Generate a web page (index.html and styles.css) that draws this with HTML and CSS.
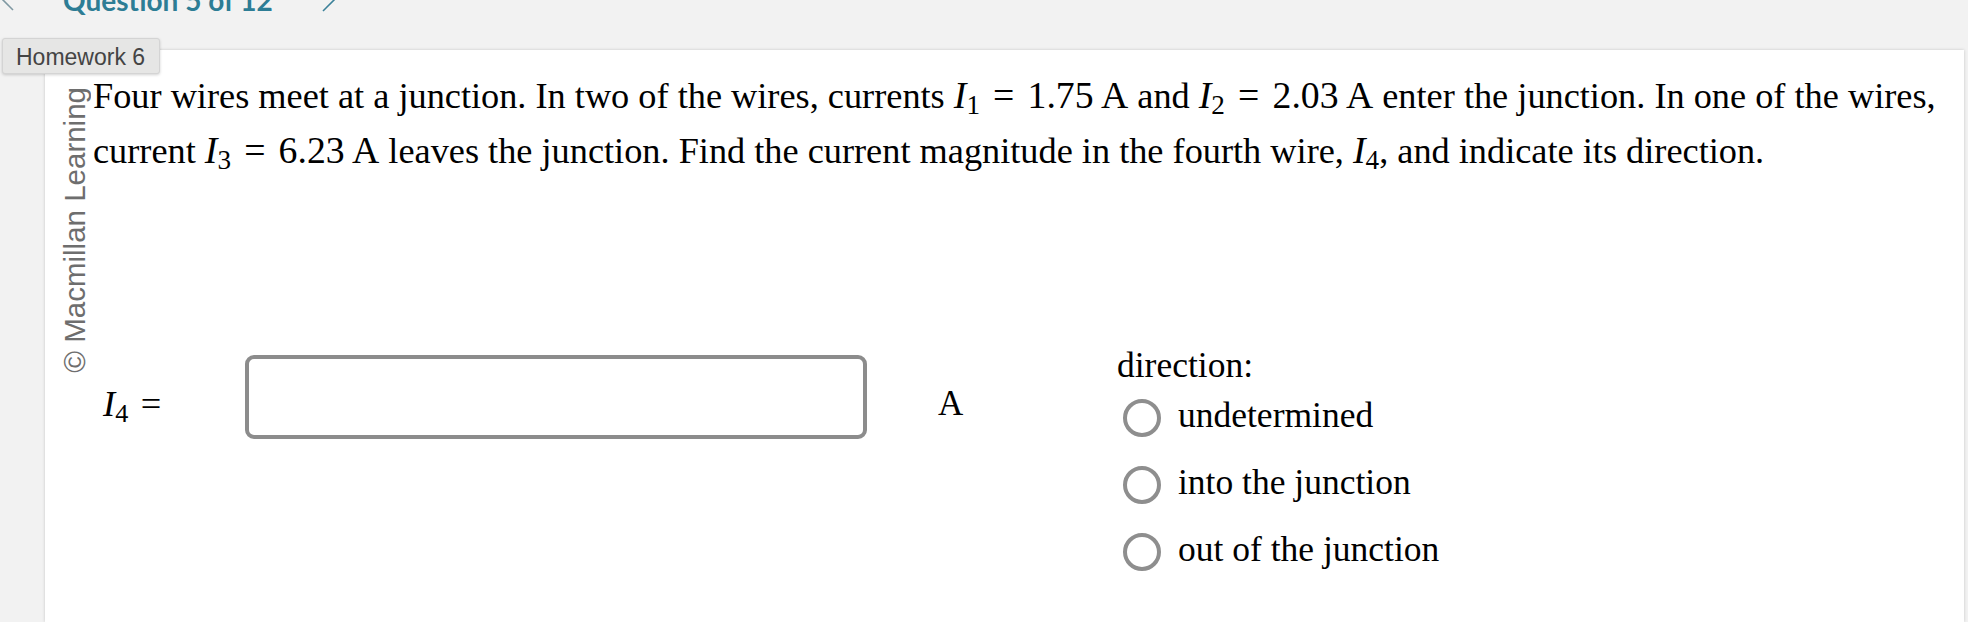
FILE: index.html
```html
<!DOCTYPE html>
<html lang="en">
<head>
    <meta charset="UTF-8">
    <meta name="viewport" content="width=device-width, initial-scale=1.0">
    <title>Question 5 of 12</title>
    <link rel="stylesheet" href="styles.css">
</head>
<body>
    <div class="qnav">
        <svg class="chev chev-left" width="16" height="14" viewBox="0 0 16 14">
            <polyline points="2,-1 13,10" fill="none" stroke="#7f98a2" stroke-width="1.6"/>
        </svg>
        <div class="qtitle">Question 5 of 12</div>
        <svg class="chev chev-right" width="16" height="14" viewBox="0 0 16 14">
            <polyline points="14,-1 2,11" fill="none" stroke="#3b8199" stroke-width="1.6"/>
        </svg>
    </div>
    <div class="tag">Homework 6</div>
    <div class="card">
        <div class="side">
            <span class="copy">© Macmillan Learning</span>
        </div>
        <div class="content">
            <p class="question">Four wires meet at a junction. In two of the wires, currents <span class="math"><i>I</i><sub>1</sub><span class="eq">=</span>1.75 A</span> and <span class="math"><i>I</i><sub>2</sub><span class="eq">=</span>2.03 A</span> enter the junction. In one of the wires, current <span class="math"><i>I</i><sub>3</sub><span class="eq">=</span>6.23 A</span> leaves the junction. Find the current magnitude in the fourth wire, <span class="math"><i>I</i><sub>4</sub></span>, and indicate its direction.</p>
            <div class="answer">
                <div class="lhs"><span class="math"><i>I</i><sub>4</sub><span class="eq">=</span></span></div>
                <input class="field" type="text" aria-label="I4">
                <div class="unit">A</div>
                <div class="direction">
                    <div class="dir-label">direction:</div>
                    <label class="opt"><input type="radio" name="dir"><span>undetermined</span></label>
                    <label class="opt"><input type="radio" name="dir"><span>into the junction</span></label>
                    <label class="opt"><input type="radio" name="dir"><span>out of the junction</span></label>
                </div>
            </div>
        </div>
    </div>
</body>
</html>
```

FILE: styles.css
```css
body {
    margin: 0;
    width: 1968px;
    height: 622px;
    overflow: hidden;
    background: #f2f2f2;
    position: relative;
    font-family: "Liberation Serif", "Times New Roman", serif;
}
.qnav {
    height: 50px;
    display: flex;
    align-items: flex-start;
    overflow: hidden;
}
.chev {
    display: block;
}
.qtitle {
    margin-left: 47px;
    margin-top: -15px;
    font-family: Lato, "Liberation Sans", sans-serif;
    font-weight: bold;
    font-size: 28px;
    line-height: 30px;
    color: #2d7d95;
}
.chev-right {
    margin-left: 48px;
}
.tag {
    position: absolute;
    left: 2px;
    top: 38px;
    width: 158px;
    height: 36px;
    padding-left: 13px;
    box-sizing: border-box;
    background: #e6e6e5;
    border: 1px solid #d4d4d4;
    border-radius: 3px;
    box-shadow: 0 1px 3px rgba(0, 0, 0, 0.18);
    font-family: "Liberation Sans", Arial, sans-serif;
    font-size: 23px;
    line-height: 36px;
    color: #444;
    z-index: 2;
}
.card {
    margin-left: 45px;
    width: 1919px;
    height: 572px;
    background: #fff;
    box-shadow: 0 0 3px rgba(0, 0, 0, 0.18);
    display: flex;
}
.side {
    width: 48px;
    flex: none;
}
.copy {
    display: inline-block;
    writing-mode: vertical-rl;
    text-orientation: sideways;
    transform: rotate(180deg);
    margin-top: 37px;
    margin-left: 15px;
    font-family: "Liberation Sans", Arial, sans-serif;
    font-size: 29.5px;
    line-height: 29px;
    color: #6e6e6e;
    white-space: nowrap;
}
.content {
    flex: 1;
    min-width: 0;
}
.question {
    margin: 18px 0 0;
    font-size: 36.3px;
    line-height: 54px;
    color: #000;
}
.math {
    font-size: 1.04em;
}
.math i {
    font-style: italic;
}
sub {
    font-size: 0.72em;
    line-height: 0;
    vertical-align: -0.22em;
}
.eq {
    display: inline-block;
    width: 0.74em;
    margin: 0 0.26em;
    text-align: center;
}
.answer {
    display: flex;
    align-items: flex-start;
    margin-top: 162px;
}
.lhs {
    width: 142px;
    padding-left: 10px;
    margin-top: 41px;
    font-size: 35px;
    line-height: 47px;
}
.field {
    width: 622px;
    height: 84px;
    margin: 15px 0 0;
    box-sizing: border-box;
    border: 4px solid #8c8c8c;
    border-radius: 9px;
    background: #fff;
    outline: none;
}
.unit {
    width: 179px;
    padding-left: 71px;
    margin-top: 40px;
    font-size: 35px;
    line-height: 47px;
}
.direction {
    margin-top: 2px;
    font-size: 35.5px;
    line-height: 47px;
}
.dir-label {
    margin-bottom: 3px;
}
.opt {
    display: flex;
    align-items: flex-start;
    margin-left: 6px;
    margin-bottom: 20px;
}
.opt input {
    appearance: none;
    -webkit-appearance: none;
    width: 38px;
    height: 38px;
    margin: 7px 17px 0 0;
    box-sizing: border-box;
    border: 4px solid #8e8e8e;
    border-radius: 50%;
    background: #fff;
}
```
